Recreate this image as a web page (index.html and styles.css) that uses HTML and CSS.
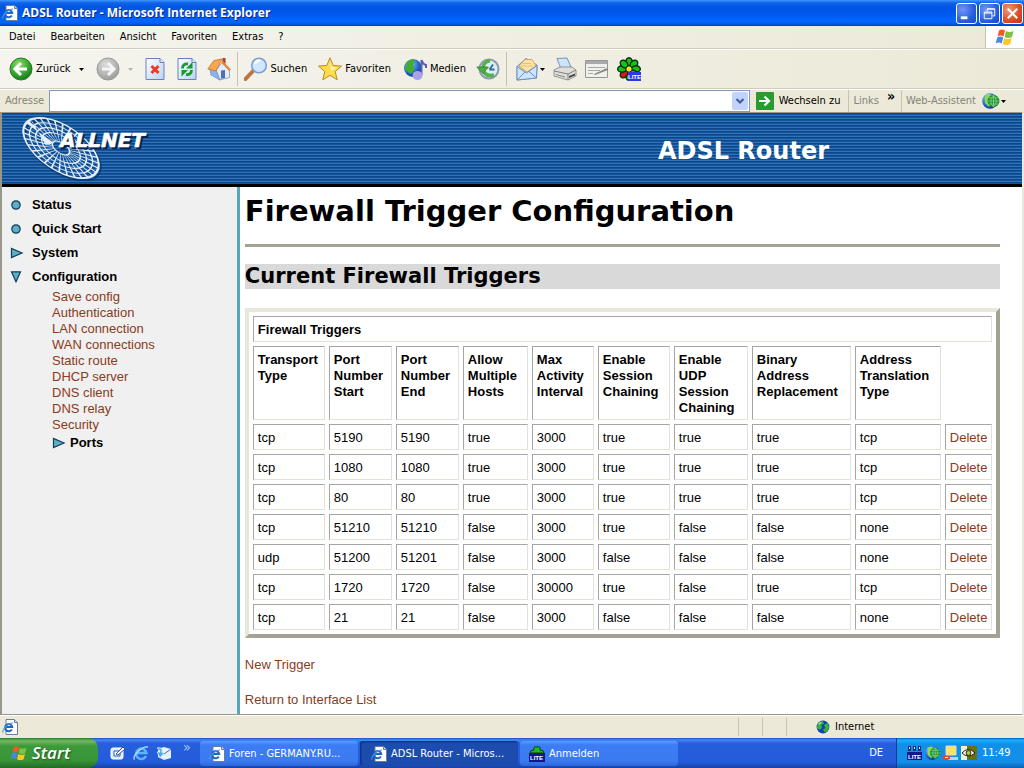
FILE: index.html
```html
<!DOCTYPE html>
<html lang="de">
<head>
<meta charset="utf-8">
<title>ADSL Router - Microsoft Internet Explorer</title>
<link rel="stylesheet" href="styles.css">
</head>
<body>
<svg class="defs" aria-hidden="true">
  <defs>
    <radialGradient id="gGreen" cx=".4" cy=".3" r=".75"><stop offset="0" stop-color="#8ee070"/><stop offset=".6" stop-color="#35a52c"/><stop offset="1" stop-color="#14751a"/></radialGradient>
    <radialGradient id="gGray" cx=".4" cy=".3" r=".75"><stop offset="0" stop-color="#dcdcdc"/><stop offset="1" stop-color="#9a9a9a"/></radialGradient>
    <radialGradient id="gGlobe" cx=".35" cy=".3" r=".8"><stop offset="0" stop-color="#8ad0ff"/><stop offset=".6" stop-color="#2163c8"/><stop offset="1" stop-color="#0a2a78"/></radialGradient>
    <linearGradient id="gDoc" x2="1" y2="1"><stop offset="0" stop-color="#fff"/><stop offset="1" stop-color="#b9d2f8"/></linearGradient>
    <symbol id="iePage" viewBox="0 0 16 16">
      <path d="M4 .5h8.500l3 3v12H4z" fill="#fff" stroke="#6b7c94"/><path d="M12.500.5v3h3" fill="#cfd8e6" stroke="#6b7c94"/>
      <path d="M9.800 10.500a3.600 3.600 0 1 1 .4-2.500H3.800" fill="none" stroke="#1c66c4" stroke-width="2"/>
      <path d="M1 13.500C-.5 11 6 4 11 4" fill="none" stroke="#4a9be8" stroke-width="1.200"/>
    </symbol>
    <symbol id="globe" viewBox="0 0 16 16">
      <circle cx="8" cy="8" r="7.300" fill="#1440b0"/>
      <path d="M2 4q3-3 6-2.500L9 4 6 6l1 3-3 2-3-2zM9 6l4-3 2 5-2 5-3 1-2-3 3-2z" fill="#35b53a"/>
      <path d="M3 5l3-2.500" stroke="#c8f0c0" stroke-width="1.200"/>
    </symbol>
    <symbol id="webGlobe" viewBox="0 0 18 18">
      <circle cx="8" cy="9" r="7.800" fill="url(#gGlobe)"/>
      <path d="M3 3q4-2 6 0l-1 4 2 3-3 5-4-4z" fill="#8fdc4a"/>
      <circle cx="11.500" cy="9" r="6" fill="#1f8a34"/>
      <path d="M6 9h11.500M7 6h9.500M7 12h9.500M11.500 3v12M11 3.500q-4.500 5.500 0 11M12 3.500q4.500 5.500 0 11" fill="none" stroke="#8de08e" stroke-width=".7"/>
    </symbol>
    <symbol id="flower" viewBox="0 0 24 24">
      <g fill="#14c316" stroke="#062c06" stroke-width="1.400">
        <ellipse cx="12" cy="5" rx="3.200" ry="4.300"/><ellipse cx="12" cy="5" rx="3.200" ry="4.300" transform="rotate(45 12 12)"/><ellipse cx="12" cy="5" rx="3.200" ry="4.300" transform="rotate(90 12 12)"/><ellipse cx="12" cy="5" rx="3.200" ry="4.300" transform="rotate(135 12 12)"/><ellipse cx="12" cy="5" rx="3.200" ry="4.300" transform="rotate(180 12 12)"/><ellipse cx="12" cy="5" rx="3.200" ry="4.300" transform="rotate(225 12 12)" fill="#e01414"/><ellipse cx="12" cy="5" rx="3.200" ry="4.300" transform="rotate(270 12 12)"/><ellipse cx="12" cy="5" rx="3.200" ry="4.300" transform="rotate(315 12 12)"/>
      </g>
      <circle cx="12" cy="12" r="2.500" fill="#ffe51f"/>
      <path d="M11 15h13v9H11z" fill="#2a3ae0"/><text x="11" y="22" class="lite-text">LITE</text>
    </symbol>
    <symbol id="flag" viewBox="0 0 20 18">
      <path d="M4 2.500Q7 .5 10 2.500L8.500 8.500Q5.500 6.500 2.500 8.500z" fill="#ee5a28"/><path d="M11 3Q14 5 18.500 3L17 9Q13 11 9.500 9z" fill="#7fc142"/>
      <path d="M2.200 9.500Q5.200 7.500 8.200 9.500L6.700 15.500Q3.700 13.500.7 15.500z" fill="#4a86e8"/><path d="M9.200 10Q12.500 12 16.700 10L15.200 16Q11.500 18 7.700 16z" fill="#fbc826"/>
    </symbol>
    <symbol id="caret" viewBox="0 0 5 3"><path d="M0 0h5L2.500 3z"/></symbol>
    <symbol id="arrowRight" viewBox="0 0 14 12"><path d="M1.500 1.500v9l10.500-4.500z" fill="#5bb0c4" stroke="#123c5c" stroke-width="1.200"/></symbol>
    <symbol id="dot" viewBox="0 0 12 12"><circle cx="6" cy="6" r="4.200" fill="#5bb0c4" stroke="#123c5c" stroke-width="1.200"/></symbol>
  </defs>
</svg>

<header class="titlebar">
  <svg class="i16"><use href="#iePage"/></svg>
  <span class="title">ADSL Router - Microsoft Internet Explorer</span>
  <div class="window-buttons">
    <button class="wb" aria-label="Minimieren"><svg viewBox="0 0 20 20"><path d="M4 13h7v3H4z" fill="#fff"/></svg></button>
    <button class="wb" aria-label="Wiederherstellen"><svg viewBox="0 0 20 20" fill="none" stroke="#fff"><path d="M7.500 8V5.500h8v7H13M7.500 5h8"/><path d="M4.500 8.500h8v7h-8zM4.500 9.500h8"/></svg></button>
    <button class="wb close" aria-label="Schließen"><svg viewBox="0 0 20 20"><path d="M5 5l10 10M15 5L5 15" stroke="#fff" stroke-width="2.200"/></svg></button>
  </div>
</header>

<nav class="menubar" aria-label="Menü">
  <button>Datei</button><button>Bearbeiten</button><button>Ansicht</button><button>Favoriten</button><button>Extras</button><button>?</button>
  <span class="brand"><svg viewBox="0 0 20 18"><use href="#flag"/></svg></span>
</nav>

<div class="toolbar">
  <button class="back"><svg class="i24" viewBox="0 0 24 24"><circle cx="12" cy="12" r="11" fill="url(#gGreen)" stroke="#2c7c2a"/><path d="M18 12H7M12 6l-6 6 6 6" fill="none" stroke="#fff" stroke-width="3"/></svg>Zurück<svg class="caret"><use href="#caret"/></svg></button>
  <button class="forward" aria-label="Vorwärts"><svg class="i24" viewBox="0 0 24 24"><circle cx="12" cy="12" r="11" fill="url(#gGray)" stroke="#999"/><path d="M6 12h11M12 6l6 6-6 6" fill="none" stroke="#f4f4f4" stroke-width="3"/></svg><svg class="caret off"><use href="#caret"/></svg></button>
  <button class="stop" aria-label="Abbrechen"><svg class="i24" viewBox="0 0 24 24"><path d="M3 1.500h14l4 4v17H3z" fill="url(#gDoc)" stroke="#6583b8"/><path d="M17 1.500v4h4" fill="#e4eefc" stroke="#6583b8"/><path d="M8.500 9l7 7M15.500 9l-7 7" stroke="#f03a1c" stroke-width="3"/></svg></button>
  <button class="refresh" aria-label="Aktualisieren"><svg class="i24" viewBox="0 0 24 24"><path d="M3 1.500h14l4 4v17H3z" fill="url(#gDoc)" stroke="#6583b8"/><path d="M17 1.500v4h4" fill="#e4eefc" stroke="#6583b8"/><path d="M7.500 11.500q0-5 5.500-4.500M16.500 13q0 5-5.500 4.500" fill="none" stroke="#199a2c" stroke-width="2.800"/><path d="M17.500 5v6.500h-6.500zM6.500 19.500v-6.500h6.500z" fill="#199a2c"/></svg></button>
  <button class="home" aria-label="Startseite"><svg class="i24" viewBox="0 0 24 24"><path d="M15.500 1h3v8h-3z" fill="#a8402c"/><path d="M9 13l6-7 7.500 7v7.500L12 23z" fill="#e2ecfc" stroke="#7595c8" stroke-width=".8"/><path d="M3 12l6 1 4 10-9-5z" fill="#8fb2ee" stroke="#6f90c8" stroke-width=".8"/><path d="M.8 12L7 3.500 15 2 9 14z" fill="#f6a84e" stroke="#c0702c" stroke-width=".8"/><path d="M15 3l9 9.500-2 1.500-7.500-8z" fill="#e58a3c"/><path d="M14 13.500l4-.5v8l-4 .8z" fill="#4d70b4"/></svg></button>
  <span class="sep"></span>
  <button class="search"><svg class="i24" viewBox="0 0 24 24"><path d="M1.500 22l8-8.500" stroke="#bd7540" stroke-width="4" stroke-linecap="round"/><circle cx="15" cy="8.500" r="7.300" fill="#cfe8ff" stroke="#7b9fd4" stroke-width="1.600"/><path d="M11 7q1.500-4 5-3.500" fill="none" stroke="#fff" stroke-width="2"/></svg>Suchen</button>
  <button class="fav"><svg class="i24" viewBox="0 0 24 24"><path d="M12 .8l3.200 7.700 8.300.6-6.300 5.400 2 8.300-7.200-4.500-7.200 4.500 2-8.300L.5 9.100l8.300-.6z" fill="#ffdc4e" stroke="#bd8a1b"/><path d="M12 4l2 6 5 .8-6 3.200z" fill="#fff6b8"/></svg>Favoriten</button>
  <button class="media"><svg class="i24" viewBox="0 0 24 24"><circle cx="10" cy="11" r="9" fill="url(#gGlobe)"/><path d="M3 6q4-5 9-3l-2 5 2 4-4 5-6-4z" fill="#44ab35"/><path d="M18.500 18V3q1 4 4.500 5v3" fill="none" stroke="#5a62b0" stroke-width="2"/><ellipse cx="14.500" cy="18.500" rx="5" ry="4.500" fill="#aaa2e8"/></svg>Medien</button>
  <button class="history" aria-label="Verlauf"><svg class="i24" viewBox="0 0 24 24"><circle cx="13" cy="12" r="9.500" fill="#d8eef2" stroke="#8a9cab" stroke-width="2"/><path d="M13.500 12.500l3.500-5M13.500 12.500h5" stroke="#3a688e" stroke-width="1.800"/><path d="M14 4q-6 0-7 7M8 15q3 5 10 3" fill="none" stroke="#56b04a" stroke-width="3.500"/><path d="M.8 10h11.500L7 16.500z" fill="#4dac3e" stroke="#2c7b2a" stroke-width=".8"/></svg></button>
  <span class="sep"></span>
  <button class="mail" aria-label="E-Mail"><svg class="i24" viewBox="0 0 24 24"><path d="M2 9.500L11 1.500 22 8l-.5 13L2 23z" fill="#b8d4f6" stroke="#7590b8"/><path d="M4 9l6-6.500h7L21 9l-9 6z" fill="#ffe2a4" stroke="#dda35c"/><path d="M6 9h12M8 6.500h8" stroke="#e8c078"/><path d="M2 9.500l9.500 6.500L22 8.500 21.500 21 2 23z" fill="#cfe5fb" stroke="#6a90c8"/><path d="M2 23l8-8M21.500 21L14 14.500" stroke="#6a90c8"/></svg><svg class="caret"><use href="#caret"/></svg></button>
  <button class="print" aria-label="Drucken"><svg class="i24" viewBox="0 0 24 24"><path d="M4 1.500L14 1l4 9-10 2z" fill="#cfe3fb" stroke="#7492bf"/><path d="M1 13l6-3h12l4 3v6l-8 4-14-4z" fill="#dededb" stroke="#80807c" stroke-width=".8"/><path d="M1 14l14 3 8-4M15 17v6" fill="none" stroke="#80807c"/><path d="M16 19l6-2.500v2L16 21z" fill="#444"/><path d="M3 17.500l9 2.500" stroke="#888"/></svg></button>
  <button class="edit" aria-label="Bearbeiten"><svg class="i24" viewBox="0 0 24 24"><path d="M.5 3.500h22v17H.5z" fill="#f0f0ec" stroke="#969694"/><path d="M1 4h21v3H1z" fill="#aaa"/><path d="M3 10.500h17M3 13.500h12M3 16.500h5" stroke="#a8a8a4"/><path d="M9 17l13-6 1 2-13 5z" fill="#888"/></svg></button>
  <button class="icq" aria-label="ICQ Lite"><svg class="i24"><use href="#flower"/></svg></button>
</div>

<div class="addressbar">
  <label for="addr">Adresse</label>
  <div class="combo"><input id="addr" type="text"><button aria-label="Adressliste öffnen"><svg viewBox="0 0 10 8"><path d="M1.500 2L5 5.500 8.500 2" fill="none" stroke="#405e94" stroke-width="2.200"/></svg></button></div>
  <button class="go"><svg viewBox="0 0 18 18"><rect width="18" height="18" rx="1" fill="#2b9a31"/><path d="M3 9h10M8.500 4.500L13 9l-4.500 4.500" fill="none" stroke="#fff" stroke-width="2.200"/></svg>Wechseln zu</button>
  <button class="links">Links <b>»</b></button>
  <button class="assist">Web-Assistent<svg class="i18"><use href="#webGlobe"/></svg><svg class="caret"><use href="#caret"/></svg></button>
</div>

<div class="page">
  <div class="banner">
    <svg class="logo" viewBox="0 0 134 68" role="img" aria-label="ALLNET">
      <g transform="translate(42 35) rotate(34)" fill="none">
        <ellipse cx="3" cy="1" rx="43" ry="22" stroke="#0a2c5c" stroke-width="2" opacity=".6"/>
        <g transform="scale(1 .51)" stroke="#e6eef9">
          <circle r="43" stroke-width="2.400"/><circle r="36" stroke-width="1.600"/><circle r="29" stroke-width="1.600"/><circle r="22" stroke-width="1.600"/><circle r="10" stroke-width="1.800"/>
          <circle r="26.500" stroke-width="33" pathLength="30" stroke-dasharray=".24 .76"/>
        </g>
      </g>
      <text x="43" y="36" class="logo-shadow">ALLNET</text><text x="41" y="34" class="logo-text">ALLNET</text>
    </svg>
    <strong class="product">ADSL Router</strong>
  </div>
  <div class="columns">
    <nav class="sidebar" aria-label="Navigation">
      <ul class="tree">
        <li><a href="#"><svg class="i12"><use href="#dot"/></svg>Status</a></li>
        <li><a href="#"><svg class="i12"><use href="#dot"/></svg>Quick Start</a></li>
        <li><a href="#"><svg class="tri"><use href="#arrowRight"/></svg>System</a></li>
        <li><a href="#"><svg class="i12" viewBox="0 0 12 12"><path d="M1.500 .8h9L6 10.800z" fill="#5bb0c4" stroke="#123c5c" stroke-width="1.200"/></svg>Configuration</a>
          <ul class="sub">
            <li><a href="#">Save config</a></li><li><a href="#">Authentication</a></li><li><a href="#">LAN connection</a></li><li><a href="#">WAN connections</a></li><li><a href="#">Static route</a></li><li><a href="#">DHCP server</a></li><li><a href="#">DNS client</a></li><li><a href="#">DNS relay</a></li><li><a href="#">Security</a></li>
            <li class="ports"><a href="#"><svg class="tri"><use href="#arrowRight"/></svg>Ports</a></li>
          </ul>
        </li>
      </ul>
    </nav>
    <main>
      <h1>Firewall Trigger Configuration</h1>
      <hr>
      <h2>Current Firewall Triggers</h2>
      <table>
        <colgroup><col class="transport"><col class="port"><col class="port"><col class="hosts"><col class="interval"><col class="session"><col class="udp"><col class="binary"><col class="translation"><col class="action"></colgroup>
        <thead>
          <tr><th colspan="10">Firewall Triggers</th></tr>
          <tr><th>Transport<br>Type</th><th>Port<br>Number<br>Start</th><th>Port<br>Number<br>End</th><th>Allow<br>Multiple<br>Hosts</th><th>Max<br>Activity<br>Interval</th><th>Enable<br>Session<br>Chaining</th><th>Enable<br>UDP<br>Session<br>Chaining</th><th>Binary<br>Address<br>Replacement</th><th>Address<br>Translation<br>Type</th><td class="blank"></td></tr>
        </thead>
        <tbody>
          <tr><td>tcp</td><td>5190</td><td>5190</td><td>true</td><td>3000</td><td>true</td><td>true</td><td>true</td><td>tcp</td><td><a href="#">Delete</a></td></tr>
          <tr><td>tcp</td><td>1080</td><td>1080</td><td>true</td><td>3000</td><td>true</td><td>true</td><td>true</td><td>tcp</td><td><a href="#">Delete</a></td></tr>
          <tr><td>tcp</td><td>80</td><td>80</td><td>true</td><td>3000</td><td>true</td><td>true</td><td>true</td><td>tcp</td><td><a href="#">Delete</a></td></tr>
          <tr><td>tcp</td><td>51210</td><td>51210</td><td>false</td><td>3000</td><td>true</td><td>false</td><td>false</td><td>none</td><td><a href="#">Delete</a></td></tr>
          <tr><td>udp</td><td>51200</td><td>51201</td><td>false</td><td>3000</td><td>false</td><td>false</td><td>false</td><td>none</td><td><a href="#">Delete</a></td></tr>
          <tr><td>tcp</td><td>1720</td><td>1720</td><td>false</td><td>30000</td><td>true</td><td>false</td><td>true</td><td>tcp</td><td><a href="#">Delete</a></td></tr>
          <tr><td>tcp</td><td>21</td><td>21</td><td>false</td><td>3000</td><td>false</td><td>false</td><td>false</td><td>none</td><td><a href="#">Delete</a></td></tr>
        </tbody>
      </table>
      <p><a href="#">New Trigger</a></p>
      <p><a href="#">Return to Interface List</a></p>
    </main>
  </div>
</div>

<div class="statusbar">
  <svg class="i16"><use href="#iePage"/></svg>
  <span class="cell first"></span><span class="cell"></span><span class="cell"></span>
  <span class="zone"><svg class="i14"><use href="#globe"/></svg>Internet</span>
</div>

<footer class="taskbar">
  <button class="start"><svg viewBox="0 0 20 18"><use href="#flag"/></svg>Start</button>
  <div class="quick">
    <button aria-label="Desktop anzeigen"><svg class="i16" viewBox="0 0 16 16"><rect x="1" y="3" width="12" height="11" rx="2" fill="#dcecff" stroke="#fff"/><path d="M4 6h6v5H4z" fill="#fff" stroke="#2b5db4"/><path d="M6 9l7-7 2 2-7 6z" fill="#fff" stroke="#33558c"/></svg></button>
    <button aria-label="Internet Explorer"><svg class="i16" viewBox="0 0 16 16"><path d="M13 11a5.200 5.200 0 1 1 .4-3H4" fill="none" stroke="#5cb6ff" stroke-width="2.500"/><path d="M1.500 14.500C-1 11 9 1 15 2" fill="none" stroke="#b8e0ff" stroke-width="1.300"/></svg></button>
    <button aria-label="Outlook Express"><svg class="i16" viewBox="0 0 16 16"><path d="M2 4l6-2 7 2v9l-7 2-6-3z" fill="#e4f1ff"/><path d="M2 4l6 5 7-5" fill="none" stroke="#3671c8"/><path d="M1 3q6-2 5 5l3-1-5 6-3-6h3q0-3-3-4z" fill="#4ea6ef" stroke="#fff" stroke-width=".6"/></svg></button>
    <span class="more">»</span>
  </div>
  <div class="tasks">
    <button><svg class="i16"><use href="#iePage"/></svg>Foren - GERMANY.RU...</button>
    <button class="active"><svg class="i16"><use href="#iePage"/></svg>ADSL Router - Micros...</button>
    <button><svg class="i16" viewBox="0 0 16 16"><path d="M1 7q0-3 4-3-1-4 3-3 4-1 3 3 4 0 4 3z" fill="#22b822" stroke="#083c08"/><path d="M0 7h16v9H0z" fill="#10188c"/><text x="1" y="14" class="lite-text">LITE</text></svg>Anmelden</button>
  </div>
  <span class="lang">DE</span>
  <div class="tray">
    <svg class="i16" viewBox="0 0 16 16"><path d="M1 1h3v5H1zM6 1h3v5H6zM11 1h3v5h-3z" fill="#1a2f70"/><path d="M2 2h1v2H2zM7 2h1v2H7zM12 2h1v2h-1z" fill="#d8e8ff"/><path d="M0 7h15v8H0z" fill="#10188c"/><text x="1" y="14" class="lite-text">LITE</text></svg>
    <svg class="i16" viewBox="0 0 18 18"><use href="#webGlobe"/></svg>
    <svg class="i16" viewBox="0 0 16 16"><path d="M3 1h10v9H3z" fill="#ffe45c" stroke="#d4dbe4"/><path d="M3 12h12v3H6z" fill="#c8d0dc"/><path d="M0 11h7v3H0z" fill="#e8452c"/><path d="M2 12h3v1H2z" fill="#fff"/></svg>
    <svg class="i16" viewBox="0 0 16 16"><path d="M0 1h16v14H0z" fill="#65730f"/><path d="M0 1h6v14H0z" fill="#eef0d8"/><path d="M1 8q6-7 13 0-7 6-13 0z" fill="#fff" stroke="#222"/><circle cx="7.500" cy="8" r="2.400" fill="#b6c940" stroke="#222"/></svg>
    <time>11:49</time>
  </div>
</footer>
</body>
</html>
```
FILE: styles.css
```css
* { box-sizing: border-box; }
body {
  margin: 0;
  min-height: 100vh;
  display: flex;
  flex-direction: column;
  background: #ece9d8;
  color: #000;
  font: 11px/14px "DejaVu Sans Condensed", "DejaVu Sans", sans-serif;
}
button {
  margin: 0;
  padding: 0;
  border: 0;
  background: none;
  color: inherit;
  font: inherit;
  display: flex;
  align-items: center;
  white-space: nowrap;
}
svg { flex: none; display: block; }
.defs { position: absolute; width: 0; height: 0; }
.i12 { width: 12px; height: 12px; }
.i14 { width: 14px; height: 14px; }
.i16 { width: 16px; height: 16px; }
.i18 { width: 18px; height: 18px; }
.i24 { width: 24px; height: 24px; }
.tri { width: 14px; height: 12px; }
.caret { width: 5px; height: 3px; }
.caret.off { fill: #b4b2a6; }
.lite-text { font: bold 6px "Liberation Sans", sans-serif; fill: #fff; }

.titlebar {
  height: 26px;
  display: flex;
  align-items: center;
  gap: 4px;
  padding: 0 1px 0 2px;
  background: linear-gradient(#3f97ff 0, #0f62ea 3px, #0054e3 8px, #0058ee 14px, #0066ff 21px, #0060f4 23px, #003fc0 26px);
}
.title { font: bold 12px/16px "Open Sans", sans-serif; color: #fff; text-shadow: 1px 1px #0a2a80; }
.window-buttons { margin-left: auto; display: flex; gap: 2px; }
.wb {
  width: 21px;
  height: 21px;
  border: 1px solid #fff;
  border-radius: 3px;
  background: radial-gradient(circle at 30% 30%, #6f97f4, #2a5ce0 60%, #1a48c8);
}
.wb svg { width: 19px; height: 19px; }
.wb.close { background: radial-gradient(circle at 30% 30%, #f09a7c, #dd4a26 60%, #c03410); }

.menubar {
  height: 23px;
  display: flex;
  align-items: center;
  gap: 15px;
  padding-left: 9px;
  background: linear-gradient(90deg, #f5f4ee, #ece9d8);
  border-bottom: 1px solid #cfccba;
}
.brand {
  align-self: stretch;
  width: 39px;
  margin-left: auto;
  display: flex;
  align-items: center;
  justify-content: center;
  background: #fff;
  border-left: 1px solid #c5c2b0;
}
.brand svg { width: 20px; height: 18px; }

.toolbar {
  height: 40px;
  display: flex;
  align-items: center;
  padding-left: 9px;
  background: linear-gradient(90deg, #f5f4ee, #ece9d8);
  border-top: 1px solid #fff;
  border-bottom: 1px solid #cfccba;
}
.sep { width: 1px; height: 34px; background: #c5c2b0; }
.back .i24, .search .i24, .fav .i24, .media .i24 { margin-right: 3px; }
.back .caret { margin-left: 8px; }
.forward { margin-left: 12px; }
.forward .caret { margin-left: 8px; }
.stop { margin-left: 10px; }
.refresh, .home { margin-left: 8px; }
.home { margin-right: 6px; }
.search { margin-left: 6px; }
.fav { margin-left: 11px; }
.media { margin-left: 12px; }
.history { margin-left: 10px; margin-right: 6px; }
.mail { margin-left: 8px; }
.mail .caret { margin-left: 1px; }
.print, .edit, .icq { margin-left: 8px; }

.addressbar {
  height: 23px;
  display: flex;
  align-items: stretch;
  border-top: 1px solid #fff;
  color: #84827a;
}
.addressbar label { padding: 0 5px; align-self: center; }
.combo { flex: 1; display: flex; background: #fff; border: 1px solid #7f9db9; }
.combo input { flex: 1; min-width: 0; border: 0; padding: 0 4px; background: none; font: inherit; }
.combo button { width: 16px; margin: 1px; background: #c3d4fc; border-radius: 2px; justify-content: center; }
.combo button svg { width: 10px; height: 8px; }
.go { color: #000; padding: 0 8px 0 6px; gap: 5px; }
.go svg { width: 18px; height: 18px; }
.links { border-left: 1px solid #c5c2b0; padding: 0 6px 0 4px; gap: 8px; }
.links b { color: #000; font-size: 14px; align-self: flex-start; line-height: 12px; }
.assist { border-left: 1px solid #c5c2b0; padding: 0 18px 0 4px; }
.assist .i18 { margin-left: 6px; }
.assist .caret { fill: #000; margin-left: 1px; }

.page {
  flex: 1;
  display: flex;
  flex-direction: column;
  margin-right: 1px;
  background: #fff;
  border: solid #9a978a;
  border-width: 1px 1px 1px 2px;
  border-right-color: #ece9d8;
  font: 13px/16px "Liberation Sans", sans-serif;
}
.banner {
  height: 74px;
  display: flex;
  align-items: flex-start;
  background: repeating-linear-gradient(#0d4789 0 1px, #16539a 1px 2px, #2d75b8 2px 3px);
  border-bottom: 3px solid #000;
}
.logo { width: 134px; height: 68px; margin-left: 17px; }
.logo-text, .logo-shadow { font: italic bold 20px "DejaVu Sans", sans-serif; fill: #fff; stroke: #fff; stroke-width: .6px; }
.logo-shadow { fill: #08264f; stroke: #08264f; }
.product {
  margin: 23px 193px 0 auto;
  color: #fff;
  font: bold 24px/30px "DejaVu Sans", sans-serif;
}
.columns { flex: 1; display: flex; }
.sidebar { width: 238px; background: #f0f0f0; border-right: 3px solid #5ba5b8; padding: 6px 0 0 8px; }
ul { list-style: none; margin: 0; padding: 0; }
a { color: #8b3a1a; text-decoration: none; }
.tree > li > a { display: flex; align-items: center; height: 24px; color: #000; font-weight: bold; }
.tree > li > a svg { margin-right: 10px; }
.tree > li > a .tri { margin-right: 8px; }
.sub { padding-left: 42px; }
.sub a { display: block; }
.ports a { display: flex; align-items: center; height: 20px; color: #000; font-weight: bold; gap: 4px; }
main { flex: 1; padding: 6px 22px 0 5px; }
h1 { margin: 0; font: bold 29px/36px "DejaVu Sans", sans-serif; }
hr { height: 3px; margin: 15px 0 17px; border: 0; background: #a5a295; }
h2 { margin: 0; background: #d9d9d9; font: bold 21px/25px "DejaVu Sans", sans-serif; }
table {
  width: 100%;
  margin-top: 19px;
  table-layout: fixed;
  border: 4px solid;
  border-color: #e9e7d9 #a5a295 #a5a295 #e9e7d9;
  border-spacing: 4px;
}
th, td {
  padding: 5px 4px 3px;
  text-align: left;
  vertical-align: top;
  border: 1px solid;
  border-color: #a5a5a5 #e4e2d8 #e4e2d8 #a5a5a5;
}
.blank { border: 0; }
.transport { width: 72px; }
.port { width: 63px; }
.hosts { width: 65px; }
.interval { width: 62px; }
.session { width: 72px; }
.udp { width: 74px; }
.binary { width: 99px; }
.translation { width: 86px; }
.action { width: 47px; }
main p { margin: 19px 0 0; }

.statusbar { height: 23px; display: flex; align-items: center; padding: 0 2px; border-top: 1px solid #fff; }
.cell { align-self: stretch; width: 24px; margin: 2px 0; border-left: 1px solid #c5c2b0; }
.cell.first { margin-left: auto; }
.zone { width: 212px; padding-left: 6px; display: flex; align-items: center; gap: 5px; }

.taskbar {
  height: 30px;
  display: flex;
  align-items: stretch;
  color: #fff;
  background: linear-gradient(#1c4fc0 0, #3f8cf3 2px, #2560dc 5px, #245bdb 24px, #1941a5 30px);
}
.start {
  width: 98px;
  padding-left: 10px;
  gap: 4px;
  border-radius: 0 10px 10px 0;
  background: linear-gradient(#2c7a2c 0, #6cbc64 3px, #3c9a3a 8px, #389638 22px, #236b24 30px);
  font: italic 600 17px/24px "Open Sans", sans-serif;
  text-shadow: 1px 1px 2px #1c4a1c;
}
.start svg { width: 18px; height: 16px; }
.quick { width: 102px; padding-left: 12px; display: flex; align-items: center; gap: 7px; }
.more { align-self: flex-start; margin: 2px 0 0 4px; font-size: 14px; color: #a8c8ff; }
.tasks { flex: 1; display: flex; gap: 2px; padding: 3px 0 2px; }
.tasks button {
  flex: 0 1 158px;
  padding-left: 9px;
  gap: 3px;
  border-radius: 3px;
  background: linear-gradient(#5c9cff, #3c7cf4 4px, #3b7af0 20px, #2c66dc);
}
.tasks .active { background: #1c4cae; box-shadow: inset 1px 1px 2px #0c2c78; padding-left: 11px; }
.tasks button svg { margin-right: 1px; }
.lang { align-self: center; margin-right: 13px; }
.tray {
  width: 128px;
  padding-left: 10px;
  display: flex;
  align-items: center;
  gap: 2px;
  border-left: 1px solid #0c3c94;
  background: linear-gradient(#0c59b9 0, #1cb0f8 2px, #1290e9 6px, #1290e9 24px, #0c60b8 30px);
}
.tray time { margin-left: 3px; }
```
